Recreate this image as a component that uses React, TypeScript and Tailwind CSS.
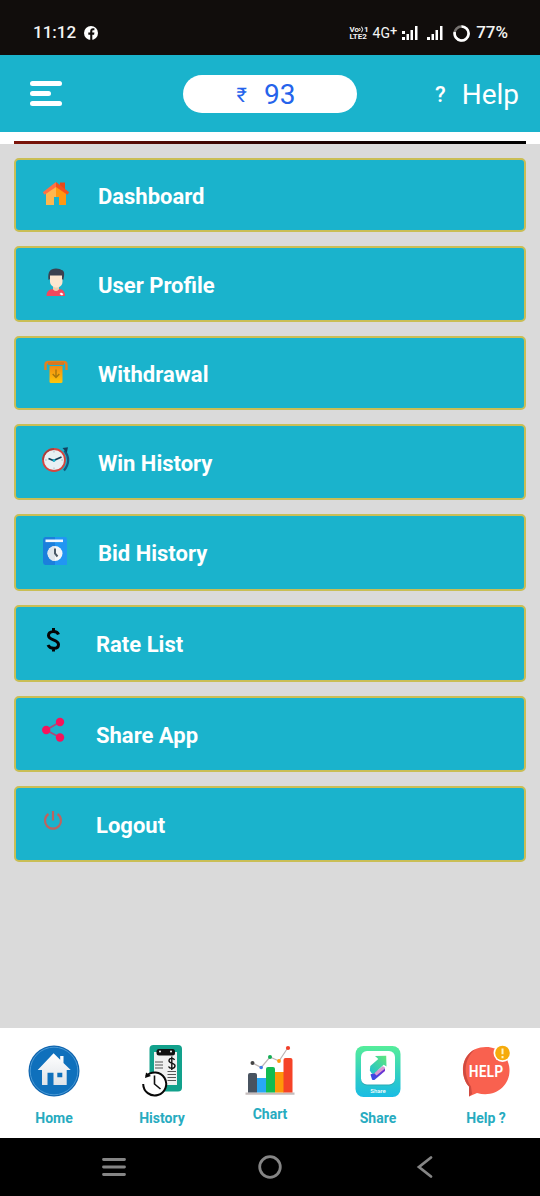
import type { ReactNode } from "react";

/* ---------- menu icons ---------- */

const HouseIcon = () => (
  <svg viewBox="0 0 28 28" className="size-7" aria-hidden="true">
    <path d="M18 3.500h5v7h-5z" fill="#e64a19" />
    <path d="M4 13 14 4l10 9v13h-7v-8h-5v8H4z" fill="#ff9811" />
    <path d="M4 13 14 4v14h-2v8H4z" fill="#ffb74d" />
    <path d="M14 3 .8 13.200l1.800 2.600L14 8z" fill="#ff7043" />
    <path d="m14 3 13.200 10.200-1.800 2.600L14 8z" fill="#f4511e" />
  </svg>
);

const PersonIcon = () => (
  <svg viewBox="0 0 28 28" className="size-7" aria-hidden="true">
    <path d="M4.500 28c0-5 3-6.500 6.500-7h6c3.500.5 6 2 6 7z" fill="#f5475c" />
    <path d="M11 17h6v4.500q-3 3-6 0z" fill="#f0cfae" />
    <path d="M8 7h12.500v6.500c0 4-3 6-6.200 6S8 17 8 13.500z" fill="#fde6cf" />
    <path d="M6.500 12C5.500 4 8 .5 14 .5c3 0 4.500.8 5.500 1.500 3 .5 3.300 4 1.800 10l-1.300-1V7.500H8V11z" fill="#3b4150" />
    <path d="m17.500 26 1.500-1.500 2.500 1.500-1.500 1.500z" fill="#fff" />
  </svg>
);

const WithdrawIcon = () => (
  <svg viewBox="0 0 28 28" className="size-7" aria-hidden="true">
    <defs>
      <linearGradient id="slip" x1="0" y1="0" x2="0" y2="1">
        <stop offset="0" stopColor="#f28a12" />
        <stop offset="1" stopColor="#ffc60a" />
      </linearGradient>
    </defs>
    <path d="M3.500 13V8q0-3 3-3h15q3 0 3 3v5" fill="none" stroke="#e5801f" strokeWidth="2.400" />
    <path d="M6 5h16v3H6z" fill="#d9781f" />
    <path d="M7.500 9h13v15.500q0 1.500-1.500 1.500H9q-1.500 0-1.500-1.500z" fill="url(#slip)" />
    <path d="M14 12.500v8m-3.300-3.500 3.300 3.500 3.300-3.500" fill="none" stroke="#a9760c" strokeWidth="1.400" />
  </svg>
);

const ClockIcon = () => (
  <svg viewBox="0 0 28 28" className="size-7" aria-hidden="true">
    <path d="M22.500 4.500q7.500 10-.5 20" fill="none" stroke="#17587d" strokeWidth="2.200" />
    <path d="m20.500 2 5.500-.7-1.200 5.500z" fill="#14405e" />
    <circle cx="12" cy="14" r="11" fill="#e8f0f4" stroke="#d6453f" strokeWidth="1.800" />
    <path d="M12 3a11 11 0 0 0-11 11" fill="none" stroke="#a3413f" strokeWidth="1.400" />
    <path d="M12 4.500v2m0 15v2M2.800 14h2m14.500 0h2" stroke="#afbac2" strokeWidth="1" />
    <path d="m6.500 12.500 5 2 8-3.500" fill="none" stroke="#153e58" strokeWidth="1.800" />
    <circle cx="12" cy="14.500" r="1.400" fill="#1ab3cc" />
  </svg>
);

const BookIcon = () => (
  <svg viewBox="0 0 28 28" className="size-7" aria-hidden="true">
    <path d="M3 0h20q2 0 2 2v26H3q-2-1-2-3V3q0-2 2-3" fill="#2196f3" />
    <path d="M3 0h10v28H3q-2-1-2-3V3q0-2 2-3" fill="#1b7fdc" />
    <path d="M3.500 2.500h17.500v2.600H3.500z" fill="#f2f8ff" />
    <circle cx="13" cy="16.500" r="7.500" fill="#f4f6f8" />
    <path d="M13 9a7.500 7.500 0 0 0 0 15z" fill="#dfe6ec" />
    <path d="M13 11.500v5l2.500 3" fill="none" stroke="#4b5966" strokeWidth="2" />
  </svg>
);

const DollarIcon = () => (
  <svg viewBox="0 0 28 28" className="size-7" aria-hidden="true">
    <path d="M16.500 8.500C15 4.500 6.500 4.500 6.500 9.500c0 5.200 10 3.500 10 9 0 5-8.500 5-10.500.5M11.500 2v4m0 15.500v4" fill="none" stroke="#050505" strokeWidth="3" />
  </svg>
);

const ShareNodesIcon = () => (
  <svg viewBox="0 0 28 28" className="size-7" aria-hidden="true">
    <path d="M18 6 4 14l14 7.500" fill="none" stroke="#a94a7a" strokeWidth="1.800" />
    <g fill="#f5145c">
      <circle cx="18" cy="6" r="4.200" />
      <circle cx="4.200" cy="14" r="4.200" />
      <circle cx="18" cy="21.500" r="4.200" />
    </g>
  </svg>
);

const PowerIcon = () => (
  <svg viewBox="0 0 28 28" className="size-7" aria-hidden="true">
    <path d="M6.500 8a8 8 0 1 0 9 0M11 5v9.500" fill="none" stroke="#bd6460" strokeWidth="2.200" />
  </svg>
);

/* ---------- tab icons ---------- */

const HomeTabIcon = () => (
  <svg viewBox="0 0 52 52" className="size-13" aria-hidden="true">
    <defs>
      <linearGradient id="homeFill" x1="0" y1="0" x2="0" y2="1">
        <stop offset="0" stopColor="#fff" />
        <stop offset="1" stopColor="#dfe3e8" />
      </linearGradient>
    </defs>
    <circle cx="26" cy="26" r="25.500" fill="#0e64ae" />
    <circle cx="26" cy="26" r="23.800" fill="#0f70bc" stroke="#4a9ad6" strokeWidth="1" />
    <path d="M9.700 25 25.600 8.300l6.600 6.400V11h3.300v7l7.200 7h-4v15H25.500V27.700h-6V40H14V25zM29.300 27.700v4.600h5v-4.600z" fill="url(#homeFill)" fillRule="evenodd" />
  </svg>
);

const HistoryTabIcon = () => (
  <svg viewBox="0 0 52 52" className="size-13" aria-hidden="true">
    <rect x="13.500" y="0" width="32.500" height="46.500" rx="4" fill="#12a18c" />
    <path d="M18 7h23v33H18z" fill="#f1f1f1" />
    <rect x="20.500" y="4" width="18.500" height="6.500" rx="2.500" fill="#111" />
    <circle cx="24" cy="6.500" r="1" fill="#fff" />
    <circle cx="35" cy="6.500" r="1" fill="#fff" />
    <path d="M19 17h8m-8 3h8m-8 3h8M31.500 26.500h8.500m-8.500 3h8.500m-8.500 3h8.500m-8.500 3h8.500" stroke="#555" strokeWidth="1" />
    <path d="M38.500 15c-1-2.500-5.500-2-5.500.8 0 3 6 1.800 6 5 0 3-5 3.500-6.500.7M35.800 11.500V25" fill="none" stroke="#111" strokeWidth="1.400" />
    <circle cx="18.500" cy="39" r="12" fill="#fff" />
    <path d="M10.200 31.200A11.500 11.500 0 1 1 7.200 39" fill="none" stroke="#080808" strokeWidth="2" />
    <path d="m9 33 1-5.500 5 3.500z" fill="#080808" />
    <path d="M18.500 30.500V39l6 5" fill="none" stroke="#111" strokeWidth="1.600" />
  </svg>
);

const ChartTabIcon = () => (
  <svg viewBox="0 0 52 52" className="size-13" aria-hidden="true">
    <path d="M1.500 47.500h49v2.300h-49z" fill="#c5bdbd" />
    <path d="M4 47.500V30q0-2 2-2h5q2 0 2 2v17.500z" fill="#485360" />
    <path d="M13 47.500V33h9v14.500z" fill="#28a8f5" />
    <path d="M22 47.500V24q0-2 2-2h5q2 0 2 2v23.500z" fill="#12bb50" />
    <path d="M31 47.500V27h9v20.500z" fill="#ff9809" />
    <path d="M39.500 47.500V15q0-2 2-2h5q2 0 2 2v32.500z" fill="#f54327" />
    <path d="m8.500 18 8.700 4.500L26 12l9 4 9-13.500" fill="none" stroke="#bdb5b5" strokeWidth="1.200" />
    <circle cx="8.500" cy="18" r="2" fill="#444" />
    <circle cx="17.200" cy="22.500" r="1.800" fill="#427de7" />
    <circle cx="26" cy="12" r="2" fill="#12ad55" />
    <circle cx="35" cy="16" r="1.900" fill="#ff9809" />
    <circle cx="44" cy="3" r="2.100" fill="#f13d28" />
  </svg>
);

const ShareTabIcon = () => (
  <svg viewBox="0 0 52 52" className="size-13" aria-hidden="true">
    <defs>
      <linearGradient id="tile" x1="0" y1="0" x2="0" y2="1">
        <stop offset="0" stopColor="#55ed9a" />
        <stop offset="0.65" stopColor="#2bcaca" />
        <stop offset="1" stopColor="#1abce4" />
      </linearGradient>
      <linearGradient id="arrow" x1="1" y1="0" x2="0" y2="1">
        <stop offset="0" stopColor="#61e77b" />
        <stop offset="1" stopColor="#1ebfd1" />
      </linearGradient>
      <linearGradient id="tail" x1="0" y1="1" x2="1" y2="0">
        <stop offset="0" stopColor="#2c50e8" />
        <stop offset="1" stopColor="#8128ca" />
      </linearGradient>
    </defs>
    <rect x="3.500" y="1" width="45" height="51" rx="8" fill="url(#tile)" />
    <rect x="9" y="7" width="34" height="33.500" rx="6" fill="#2ba9b5" />
    <rect x="9" y="6" width="34" height="33.500" rx="6" fill="#fff" />
    <path d="m18.500 29.500 13.500-7.500q1.500 1.500 1 4L23 34.500q-1.500 1-3 0z" fill="url(#tail)" />
    <path d="m22 28 9-7 2 2.500-8.500 7z" fill="#d79ad2" />
    <path d="m23 11 11.200-.2.3 10.700-2.800-1.700L21.500 29q-2.500-.5-3.700-3.500l.5-4.500 8-7z" fill="url(#arrow)" />
    <text x="26" y="48" textAnchor="middle" fill="#fff" className="font-['Roboto',sans-serif] text-[6px] font-medium">Share</text>
  </svg>
);

const HelpTabIcon = () => (
  <svg viewBox="0 0 52 52" className="size-13" aria-hidden="true">
    <path d="M9 51.500V41.500C-2 30 1 2 26 2c13 0 23.500 9.500 23.500 23.500C49.500 42 34 53 17 48q-3 1-8 3.500" fill="#f9614f" />
    <path d="M9 51.500V41.500C0 31 1 11 15 4.500 4 14 3 29 11 41.500L12 49z" fill="#cf4a40" />
    <text x="26" y="31.500" textAnchor="middle" fill="#fff" className="font-['Roboto_Condensed','Roboto',sans-serif] text-[16px] font-medium">HELP</text>
    <circle cx="42.500" cy="8" r="9" fill="#fff" />
    <circle cx="42.500" cy="8" r="7.300" fill="#f6ab0b" />
    <path d="M42.500 3.500v5.800m0 1.700v2.200" stroke="#fff4c4" strokeWidth="2" />
  </svg>
);

/* ---------- data ---------- */

type MenuItem = { label: string; icon: ReactNode; row: string; lift: string; text: string };

const menu: MenuItem[] = [
  { label: "Dashboard", icon: <HouseIcon />, row: "h-[74px]", lift: "mb-1", text: "ml-7" },
  { label: "User Profile", icon: <PersonIcon />, row: "h-[76px]", lift: "mb-1", text: "ml-7" },
  { label: "Withdrawal", icon: <WithdrawIcon />, row: "h-[74px]", lift: "mb-1", text: "ml-7" },
  { label: "Win History", icon: <ClockIcon />, row: "h-[76px]", lift: "mb-1", text: "ml-7" },
  { label: "Bid History", icon: <BookIcon />, row: "h-[77px]", lift: "mb-1", text: "ml-7" },
  { label: "Rate List", icon: <DollarIcon />, row: "h-[77px]", lift: "mb-2", text: "ml-[26px]" },
  { label: "Share App", icon: <ShareNodesIcon />, row: "h-[76px]", lift: "mb-2", text: "ml-[26px]" },
  { label: "Logout", icon: <PowerIcon />, row: "h-[76px]", lift: "mb-2", text: "ml-[26px]" },
];

const tabs: { label: string; icon: ReactNode; gap: string }[] = [
  { label: "Home", icon: <HomeTabIcon />, gap: "gap-3" },
  { label: "History", icon: <HistoryTabIcon />, gap: "gap-3" },
  { label: "Chart", icon: <ChartTabIcon />, gap: "gap-2" },
  { label: "Share", icon: <ShareTabIcon />, gap: "gap-3" },
  { label: "Help ?", icon: <HelpTabIcon />, gap: "gap-3" },
];

/* ---------- sections ---------- */

function StatusBar() {
  return (
    <div className="flex h-[55px] items-center justify-between bg-[#110d0c] pt-[11px] pr-8 pl-[33px] text-[17px] font-medium text-[#f4f4f4]">
      <div className="flex items-center gap-2">
        <span>11:12</span>
        <svg viewBox="0 0 14 14" className="size-[14px]" aria-label="Facebook">
          <circle cx="7" cy="7" r="7" fill="#fff" />
          <path d="M6.200 14V8.700H4.300V6.600h1.900V5.300c0-2 1.100-3 2.800-3h1.400v2H9.300c-.7 0-1 .4-1 1v1.300h2.100l-.3 2.100H8.300V14z" fill="#110d0c" />
        </svg>
      </div>
      <div className="flex items-center">
        <div className="mr-1 flex flex-col text-[8px] leading-[7px] font-bold">
          <span className="flex items-center">
            Vo
            <svg viewBox="0 0 5 7" className="h-[7px] w-[5px]" aria-hidden="true">
              <path d="M.5 2q1.300 1.500 0 3M2.500.7q2.400 2.800 0 5.600" fill="none" stroke="#fff" />
            </svg>
            1
          </span>
          <span>LTE2</span>
        </div>
        <span className="text-[14px] font-normal">4G</span>
        <span className="mr-1 mb-1 text-[13px]">+</span>
        <svg viewBox="0 0 42 16" className="mr-[10px] h-4 w-[42px]" fill="#fff" aria-label="Signal strength">
          <path d="M1 6h3v3H1zM1 12h3v3H1zM5.500 9H8v6H5.500zM9.500 5H12v10H9.500zM14 1h2.500v14H14zM26 12h3v3h-3zM30.500 9H33v6h-2.500zM34.500 5H37v10h-2.500zM39 1h2.500v14H39z" />
        </svg>
        <svg viewBox="0 0 17 17" className="mr-[6px] size-[17px]" fill="none" strokeWidth="2.600" aria-label="Battery">
          <circle cx="8.500" cy="8.500" r="7" stroke="#777371" />
          <path d="M8.500 1.500A7 7 0 1 1 1.800 7" stroke="#fff" />
        </svg>
        <span>77%</span>
      </div>
    </div>
  );
}

function Header() {
  return (
    <header className="flex h-[77px] items-center bg-[#1ab3cc] px-[21px]">
      <div className="flex flex-1">
        <button type="button" aria-label="Open menu" className="ml-[9px] flex flex-col gap-[5px]">
          <span className="h-[5px] w-8 rounded-full bg-white" />
          <span className="h-[5px] w-[21px] rounded-full bg-white" />
          <span className="h-[5px] w-8 rounded-full bg-white" />
        </button>
      </div>
      <div className="flex h-[38px] w-[35%] items-center justify-center gap-[17px] rounded-full bg-white pt-[2px] pr-2 text-[#2563eb]">
        <span className="text-[20px]">₹</span>
        <span className="text-[28px]">93</span>
      </div>
      <div className="flex flex-1 justify-end">
        <a href="#help" className="flex items-center gap-4 pt-[2px] text-white">
          <span className="text-[22px] font-medium">?</span>
          <span className="text-[28px]">Help</span>
        </a>
      </div>
    </header>
  );
}

export default function App() {
  return (
    <div className="flex min-h-screen flex-col bg-[#dadada] font-['Roboto','Noto_Sans',sans-serif]">
      <StatusBar />
      <Header />
      <div className="bg-white px-[14px] pt-[9px]">
        <div className="h-[3px] bg-linear-to-r from-[#7d150b] to-black" />
      </div>

      <main className="flex-1 px-[14px] py-[14px]">
        <ul className="flex flex-col gap-[14px]">
          {menu.map((item) => (
            <li key={item.label}>
              <a
                href={"#" + item.label.toLowerCase().replace(" ", "-")}
                className={`flex items-center rounded-[5px] border-2 border-[#c9be55] bg-[#1ab3cc] pl-[26px] ${item.row}`}
              >
                <span className={item.lift}>{item.icon}</span>
                <span className={`pt-[2px] text-[22px] font-bold text-white ${item.text}`}>{item.label}</span>
              </a>
            </li>
          ))}
        </ul>
      </main>

      <nav className="grid h-[110px] grid-cols-5 bg-white pt-[17px]" aria-label="Main">
        {tabs.map((tab) => (
          <a key={tab.label} href={"#" + tab.label.toLowerCase()} className={`flex flex-col items-center ${tab.gap}`}>
            {tab.icon}
            <span className="text-[14px] leading-[18px] font-bold text-[#27abc0]">{tab.label}</span>
          </a>
        ))}
      </nav>

      <div className="flex h-[58px] items-center justify-around bg-black px-[36px]">
        <button type="button" aria-label="Recent apps">
          <svg viewBox="0 0 26 26" className="size-[26px]" fill="none" stroke="#858585" strokeWidth="2.800" strokeLinecap="round">
            <path d="M2.500 5.500h21M2.500 13h21M2.500 20.500h21" />
          </svg>
        </button>
        <button type="button" aria-label="Home screen">
          <svg viewBox="0 0 26 26" className="size-[26px]" fill="none" stroke="#858585" strokeWidth="2.800">
            <circle cx="13" cy="13" r="10.300" />
          </svg>
        </button>
        <button type="button" aria-label="Back">
          <svg viewBox="0 0 26 26" className="size-[26px]" fill="none" stroke="#858585" strokeWidth="2.800" strokeLinecap="round">
            <path d="M18 3.500 6 13l12 9.500" />
          </svg>
        </button>
      </div>
    </div>
  );
}
